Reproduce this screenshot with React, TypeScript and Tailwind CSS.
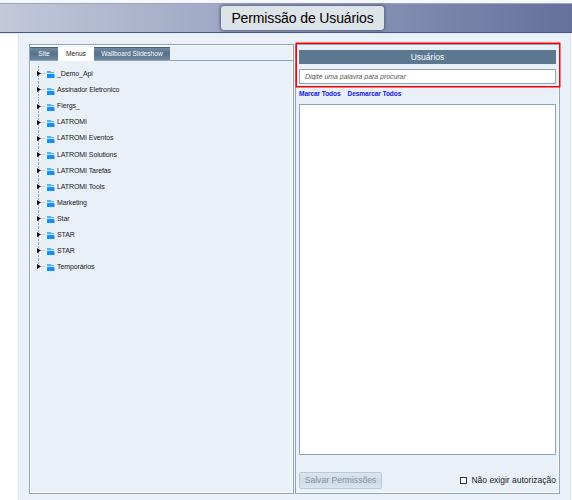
import React from "react";

const items = [
  "_Demo_Api", "Assinador Eletronico", "Fiergs_", "LATROMI", "LATROMI Eventos",
  "LATROMI Solutions", "LATROMI Tarefas", "LATROMI Tools", "Marketing", "Star",
  "STAR", "STAR", "Temporários",
];

function Folder() {
  return (
    <svg width="8" height="7" viewBox="0 0 8 7" className="shrink-0">
      <path d="M0 0h3.5l.8 1H7v1H0z" fill="#55aff5" />
      <path d="M0 2h7v1H0z" fill="#c5e3fb" />
      <path d="M0 3h7.5v4H0z" fill="#148ffa" />
    </svg>
  );
}

function TreeRow({ label, last }: { label: string; last: boolean }) {
  return (
    <li className="flex h-[16.08px] items-center">
      <svg width="10" height="16.08" viewBox="0 0 10 16.08" className="shrink-0">
        <path d={last ? "M1.5 0V8" : "M1.5 0V16.08"} stroke="#9aa4ae" strokeDasharray="2 1" />
        <path d="M4 7.5h4" stroke="#c0cad3" />
        <path d="M0 5l4 2.5L0 10z" fill="#111" />
      </svg>
      <span className="mt-[1px] flex"><Folder /></span>
      <span className="ml-[2px] whitespace-nowrap">{label}</span>
    </li>
  );
}

const tab = "flex h-full items-center justify-center border-t border-[#48627a] bg-gradient-to-b from-[#6f89a0] via-[#55728c] to-[#7089a0] text-white";

export default function App() {
  return (
    <div className="flex h-[500px] w-[572px] flex-col overflow-hidden bg-white font-['Liberation_Sans',Arial,sans-serif] text-[#222]">
      <div className="h-[3px] shrink-0 bg-[#f5f8fc]" />
      <header className="flex h-[30px] shrink-0 justify-center border-t border-b border-t-[#9ba3b8] border-b-[#445a91] bg-gradient-to-r from-[#c3c8da] via-[#949fbe] to-[#63719b] pl-[33px]">
        <h1 className="mt-[2px] flex h-[24px] w-[163px] items-center justify-center whitespace-nowrap rounded-[3px] bg-[#dce3e9] text-[14px] tracking-[-0.12px] text-black shadow-[0_0_3px_1px_#556078]">
          Permissão de Usuários
        </h1>
      </header>
      <div className="h-px shrink-0 bg-[#e3e8f1]" />
      <main className="ml-[18px] flex min-h-0 w-[553px] flex-1 items-start border-x border-[#d9e5ef] bg-[#e9f0f8] pt-[10px] pl-[10px]">
        <section className="h-[450px] w-[265px] shrink-0 border border-[#8fa5ba] shadow-[inset_1px_1px_0_#fff,inset_-1px_-1px_0_#fff]">
          <nav className="mt-[2px] flex h-[14px] border-b border-[#8fa5ba] text-[6.6px]">
            <div className={`${tab} w-[28px]`}>Site</div>
            <div className="flex h-[14px] w-[36px] items-center justify-center bg-white">Menus</div>
            <div className={`${tab} w-[76px]`}><span className="whitespace-nowrap">Wallboard Slideshow</span></div>
          </nav>
          <ul className="mt-[5.4px] pl-[7px] text-[7px] tracking-[-0.09px]">
            {items.map((label, i) => <TreeRow key={i} label={label} last={i === items.length - 1} />)}
          </ul>
        </section>
        <section className="relative ml-px flex h-[450px] w-[265px] shrink-0 flex-col border border-[#8fa5ba] px-[3px] shadow-[inset_-1px_-1px_0_#fff]">
          <div className="pointer-events-none absolute top-[-2px] left-0 h-[44px] w-[264px] border border-[#ff0000] shadow-[0_0_0_0.5px_#ff0000]" />
          <h2 className="mt-[5px] flex h-[14px] shrink-0 items-center justify-center bg-[#5c7891] text-[8.5px] text-white">Usuários</h2>
          <input className="mt-[5px] h-[15px] w-full shrink-0 border border-[#8fa5ba] bg-white px-[5px] text-[6.9px] italic outline-none placeholder:text-[#555]" placeholder="Digite uma palavra para procurar" />
          <div className="mt-[5px] flex h-[10px] shrink-0 items-center gap-[7px] text-[6.6px] font-bold tracking-[-0.1px] whitespace-nowrap text-[#1616ed]">
            <span>Marcar Todos</span><span>Desmarcar Todos</span>
          </div>
          <div className="mt-[5px] h-[351px] shrink-0 border border-[#8fa5ba] bg-white" />
          <div className="mt-[17px] flex h-[17px] shrink-0 items-center justify-between">
            <button className="h-[17px] w-[83px] rounded-[2px] border border-[#b9c8d5] bg-gradient-to-b from-[#dce6ee] via-[#cedae5] to-[#dbe5ee] text-[8.6px] leading-none whitespace-nowrap text-[#8494a4]">Salvar Permissões</button>
            <label className="flex items-center gap-[4px] text-[8.5px] whitespace-nowrap">
              <span className="h-[7px] w-[7px] border border-[#333] bg-white" />Não exigir autorização
            </label>
          </div>
        </section>
      </main>
    </div>
  );
}
